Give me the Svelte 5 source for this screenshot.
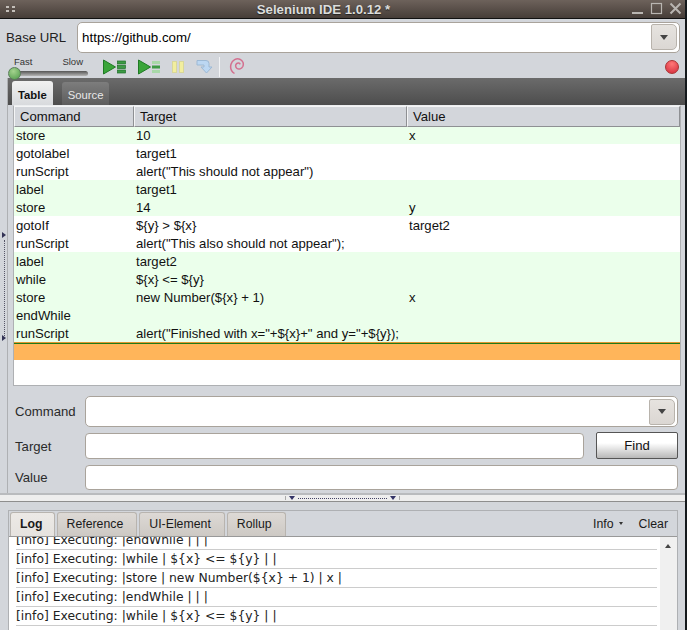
<script>
	const rows = [
		["store", "10", "x", "ok"],
		["gotolabel", "target1", "", ""],
		["runScript", 'alert("This should not appear")', "", ""],
		["label", "target1", "", "ok"],
		["store", "14", "y", "ok"],
		["gotoIf", "${y} > ${x}", "target2", ""],
		["runScript", 'alert("This also should not appear");', "", ""],
		["label", "target2", "", "ok"],
		["while", "${x} <= ${y}", "", "ok"],
		["store", "new Number(${x} + 1)", "x", "ok"],
		["endWhile", "", "", "ok"],
		["runScript", 'alert("Finished with x="+${x}+" and y="+${y});', "", "ok"]
	];

	const logLines = [
		"[info] Executing: |endWhile | | |",
		"[info] Executing: |while | ${x} <= ${y} | |",
		"[info] Executing: |store | new Number(${x} + 1) | x |",
		"[info] Executing: |endWhile | | |",
		"[info] Executing: |while | ${x} <= ${y} | |"
	];
</script>

<div class="window">
	<header class="titlebar">
		<span class="grip"><i></i><i></i><i></i><i></i></span>
		<span class="title">Selenium IDE 1.0.12 *</span>
		<span class="controls">
			<svg width="54" height="14" viewBox="0 0 54 14" fill="none" stroke="#b9b5b1">
				<path d="M1 11h11" stroke-width="2" />
				<rect x="20.500" y="1.500" width="10" height="10" stroke-width="1.200" />
				<path d="M39.500 1.500l10 10M49.500 1.500l-10 10" stroke-width="2" />
			</svg>
		</span>
	</header>

	<div class="url-row">
		<label for="base-url">Base URL</label>
		<div class="combo">
			<input id="base-url" value="https://github.com/" />
			<span class="drop"><b></b></span>
		</div>
	</div>

	<div class="toolbar">
		<div class="speed">
			<div class="speed-labels"><span>Fast</span><span>Slow</span></div>
			<div class="track"><span class="knob"></span></div>
		</div>
		<svg class="play" width="26" height="18" viewBox="0 0 26 18">
			<path d="M1.500 2l12 7-12 7z" fill="#3aa53a" stroke="#1f7a25" />
			<g fill="#3d9a45" stroke="#1f6f2a" stroke-width=".7">
				<rect x="15.500" y="3" width="8" height="3" />
				<rect x="15.500" y="7.500" width="8" height="3" />
				<rect x="15.500" y="12" width="8" height="3" />
			</g>
		</svg>
		<svg class="play" width="26" height="18" viewBox="0 0 26 18">
			<path d="M1.500 2l12 7-12 7z" fill="#3aa53a" stroke="#1f7a25" />
			<rect x="15" y="3" width="8" height="3" fill="#a8d8a8" />
			<rect x="15" y="7.500" width="8" height="3" fill="#3d9a45" />
			<rect x="15" y="12" width="8" height="3" fill="#a8d8a8" />
		</svg>
		<svg class="play pause" width="14" height="18" viewBox="0 0 14 18">
			<g fill="#f2ee9e" stroke="#d8d79a">
				<rect x="1.500" y="3.500" width="4" height="11" />
				<rect x="8.500" y="3.500" width="4" height="11" />
			</g>
		</svg>
		<svg class="step" width="17" height="18" viewBox="0 0 17 18">
			<path d="M1 2.500h9a3 3 0 0 1 3 3V9h3l-5.500 6L5 9h3V7H1z" fill="#bcd7f2" stroke="#9db9d4" />
		</svg>
		<span class="sep"></span>
		<svg class="swirl" width="16" height="18" viewBox="0 0 16 18" fill="none" stroke="#d3708f" stroke-width="1.500">
			<path d="M5.500 16.500C2.500 14.500 1 11 2 7.300 3.200 3 7.500 1 10.800 2.200c3.200 1.200 4.200 4.600 3 7.300-1.200 2.400-4 3.300-5.800 2-1.700-1.200-1.800-3.700-.4-4.900 1.200-1 3-.7 3.600.8" />
		</svg>
		<span class="record"></span>
	</div>

	<div class="body">
		<div class="gutter">
			<span class="arrow top"></span>
			<span class="dots"></span>
			<span class="arrow low"></span>
		</div>
		<div class="main">
			<div class="editor-tabs">
				<span class="etab active">Table</span>
				<span class="etab">Source</span>
			</div>
			<div class="table">
				<div class="row head">
					<span>Command</span><span>Target</span><span>Value</span>
				</div>
				{#each rows as r}
					<div class="row" class:ok={r[3] === "ok"}>
						<span>{r[0]}</span><span>{r[1]}</span><span>{r[2]}</span>
					</div>
				{/each}
				<div class="row current"></div>
				<div class="blank"></div>
			</div>

			<div class="form">
				<div class="field cmd">
					<label for="f-cmd">Command</label>
					<div class="combo">
						<input id="f-cmd" />
						<span class="drop"><b></b></span>
					</div>
				</div>
				<div class="field tgt">
					<label for="f-tgt">Target</label>
					<input id="f-tgt" />
					<button>Find</button>
				</div>
				<div class="field val">
					<label for="f-val">Value</label>
					<input id="f-val" />
				</div>
			</div>
		</div>
	</div>

	<div class="splitter">
		<div class="grippy"><b></b><span></span><b></b></div>
	</div>

	<div class="bottom">
		<div class="log-panel">
			<div class="log-tabs">
				<span class="ltab active">Log</span>
				<span class="ltab">Reference</span>
				<span class="ltab">UI-Element</span>
				<span class="ltab">Rollup</span>
				<span class="spacer"></span>
				<span class="log-btn">Info <b></b></span>
				<span class="log-btn clear">Clear</span>
			</div>
			<div class="log-body">
				<div class="log-lines">
					{#each logLines as line}
						<div class="log-line">{line}</div>
					{/each}
				</div>
				<div class="scrollbar"><b></b></div>
			</div>
		</div>
	</div>
</div>

<style>
	:global(body) {
		margin: 0;
		background: #14191c;
	}

	.window {
		width: 685px;
		height: 630px;
		overflow: hidden;
		display: flex;
		flex-direction: column;
		background: #d3d6db;
		font-family: "Liberation Sans", Arial, sans-serif;
		font-size: 13.15px;
		color: #1a1a1a;
	}

	.titlebar {
		flex: none;
		height: 18px;
		display: flex;
		align-items: center;
		justify-content: center;
		padding-right: 38px;
		position: relative;
		background: linear-gradient(#6d625b, #463d38);
		border-bottom: 1px solid #111;
	}

	.title {
		font-weight: bold;
		font-size: 13.2px;
		color: #dcdddc;
		text-shadow: 0 1px 1px #222;
	}

	.grip {
		position: absolute;
		left: 6px;
		top: 6px;
		display: grid;
		grid-template-columns: 3px 3px;
		gap: 2px 3px;
	}

	.grip i {
		height: 2px;
		background: #c4bfba;
	}

	.controls {
		position: absolute;
		right: 0;
		top: 2px;
		line-height: 0;
	}

	.url-row {
		flex: none;
		height: 36px;
		display: flex;
		align-items: center;
		padding: 0 5px 0 6px;
		gap: 11px;
	}

	.url-row label {
		font-size: 13.2px;
		color: #222;
	}

	.combo {
		flex: 1;
		display: flex;
		align-items: center;
		height: 31px;
		background: #fff;
		border: 1px solid #a9a39b;
		border-radius: 5px;
		padding-right: 2px;
		box-sizing: border-box;
	}

	input {
		flex: 1;
		min-width: 0;
		border: 1px solid #a9a39b;
		border-radius: 4px;
		background: #fff;
		box-sizing: border-box;
		font: inherit;
		outline: none;
		padding: 0 4px;
	}

	.combo input {
		border: none;
		height: 100%;
		background: transparent;
		font-size: 13.3px;
	}

	.drop {
		width: 26px;
		height: 26px;
		flex: none;
		display: flex;
		align-items: center;
		justify-content: center;
		box-sizing: border-box;
		background: linear-gradient(#e6e3df, #dbd7d3);
		border: 1px solid #b8b3ac;
		border-radius: 2px 5px 5px 2px;
	}

	.drop b {
		border: 4px solid transparent;
		border-top: 5px solid #444;
		border-bottom: none;
	}

	.toolbar {
		flex: none;
		height: 23px;
		display: flex;
		align-items: center;
		position: relative;
		padding-left: 8px;
	}

	.speed {
		width: 80px;
		margin-right: 14px;
	}

	.speed-labels {
		display: flex;
		justify-content: space-between;
		font-size: 9.500px;
		line-height: 10px;
		padding: 0 5px 0 6px;
		color: #333;
	}

	.track {
		height: 5px;
		margin: 4px 0 0 4px;
		border-radius: 3px;
		background: linear-gradient(#555, #b5b5b5);
		position: relative;
	}

	.knob {
		position: absolute;
		left: -4px;
		top: -4px;
		width: 13px;
		height: 13px;
		border-radius: 50%;
		background: radial-gradient(circle at 40% 30%, #a4d38e, #4f9a4a);
		border: 1px solid #5a7d5a;
		box-sizing: border-box;
	}

	.play {
		margin-right: 9px;
		flex: none;
	}

	.pause {
		margin: 0 11px 0 -1px;
	}

	.step {
		flex: none;
	}

	.sep {
		width: 1px;
		height: 20px;
		background: #f2f3f5;
		margin: 0 9px 0 6px;
	}

	.swirl {
		flex: none;
		margin-top: -2px;
	}

	.record {
		position: absolute;
		right: 6px;
		top: 5px;
		width: 14px;
		height: 14px;
		box-sizing: border-box;
		border-radius: 50%;
		border: 1px solid #a33;
		background: radial-gradient(circle at 50% 25%, #f77, #d22b3b);
	}

	.body {
		flex: none;
		height: 415px;
		display: flex;
	}

	.gutter {
		width: 7px;
		flex: none;
		border-right: 1px solid #aeb0b3;
		position: relative;
	}

	.dots {
		position: absolute;
		left: 4px;
		top: 162px;
		height: 96px;
		border-left: 1px dotted #556;
	}

	.arrow {
		position: absolute;
		left: 2px;
		border: 3px solid transparent;
		border-left: 4px solid #335;
		border-right: none;
	}

	.arrow.top {
		top: 154px;
	}

	.arrow.low {
		top: 257px;
	}

	.main {
		flex: 1;
		min-width: 0;
		display: flex;
		flex-direction: column;
	}

	.editor-tabs {
		flex: none;
		height: 27px;
		display: flex;
		align-items: flex-end;
		padding-left: 4px;
		gap: 9px;
		box-sizing: border-box;
		background: linear-gradient(#6b6b6b, #4d4d4d);
	}

	.etab {
		height: 23px;
		box-sizing: border-box;
		padding: 7px 6px 0;
		font-size: 11.300px;
		color: #e8e8e8;
		background: linear-gradient(#7d7d7d, #5d5d5d);
		border-radius: 3px 3px 0 0;
	}

	.etab.active {
		height: 24px;
		padding: 8px 6px 0;
		font-weight: bold;
		color: #111;
		background: linear-gradient(#f1f1f1, #d8dadd);
	}

	.table {
		flex: none;
		margin: 0 4px 0 5px;
		background: #fff;
		border: 1px solid #aeb0b3;
		border-top: 1px solid #eceef0;
	}

	.row {
		display: grid;
		grid-template-columns: 120px 273px 1fr;
		height: 18px;
		line-height: 19px;
		white-space: nowrap;
		color: #111;
	}

	.row span {
		padding-left: 2px;
	}

	.row.ok {
		background: #ebffeb;
	}

	.row.head {
		height: 20px;
		background: #d3d6db;
		line-height: 19px;
	}

	.row.head span {
		padding-left: 5px;
		border: 1px solid;
		border-color: #f4f5f6 #8e9093 #8e9093 #f4f5f6;
		box-sizing: border-box;
	}

	.row.current {
		background: linear-gradient(#e0962f 1px, #1f7a1a 1px 2px, #ffb55a 2px);
	}

	.blank {
		height: 25px;
	}

	.form {
		flex: 1;
		display: flex;
		flex-direction: column;
		padding: 10px 7px 0 7px;
	}

	.field {
		display: flex;
		align-items: center;
	}

	.field label {
		width: 70px;
		flex: none;
		color: #2a2a2a;
	}

	.field.tgt {
		margin-top: 6px;
		height: 26px;
	}

	.field.tgt input {
		height: 26px;
	}

	.field.val {
		margin-top: 6px;
		height: 25px;
	}

	.field.val input {
		height: 25px;
	}

	button {
		width: 82px;
		height: 27px;
		flex: none;
		margin: -1px 0 0 12px;
		font: inherit;
		color: #111;
		border: 1px solid #555;
		border-radius: 2px;
		background: linear-gradient(#fff 40%, #b8b8b8);
		padding: 0;
	}

	.splitter {
		flex: none;
		height: 9px;
		border-bottom: 1px solid #8e8e8e;
		border-top: 2px solid #b9bbbe;
		background: #eeeeee;
		box-sizing: border-box;
		display: flex;
		padding-left: 285px;
		align-items: center;
	}

	.grippy {
		display: flex;
		align-items: center;
		gap: 3px;
		width: 115px;
		box-sizing: border-box;
		padding: 0 3px;
		border-left: 1px solid #aaa;
		border-right: 1px solid #aaa;
	}

	.grippy b {
		border: 3px solid transparent;
		border-top: 4px solid #336;
		border-bottom: none;
	}

	.grippy span {
		flex: 1;
		border-top: 1px dotted #446;
	}

	.bottom {
		flex: 1;
		min-height: 0;
		padding: 8px 7px 0 8px;
	}

	.log-panel {
		height: 100%;
		border: 1px solid #aeb0b3;
		border-bottom: none;
		box-sizing: border-box;
		display: flex;
		flex-direction: column;
	}

	.log-tabs {
		flex: none;
		height: 26px;
		padding-left: 1px;
		display: flex;
		align-items: flex-end;
		gap: 2px;
		border-bottom: 1px solid #999;
		font-size: 12.300px;
		box-sizing: border-box;
	}

	.ltab {
		height: 24px;
		padding: 0 13px 0 9px;
		line-height: 23px;
		box-sizing: border-box;
		background: linear-gradient(#ddd9d5, #cdc9c4);
		border: 1px solid #b8b4af;
		border-bottom: none;
		border-radius: 3px 3px 0 0;
		color: #1a1a1a;
	}

	.ltab.active {
		padding-right: 11px;
		font-weight: bold;
		background: linear-gradient(#ece9e6, #e6e3df);
	}

	.spacer {
		flex: 1;
	}

	.log-btn {
		align-self: center;
		margin-right: 9px;
		display: flex;
		align-items: center;
		gap: 5px;
	}

	.log-btn.clear {
		margin-left: 5px;
	}

	.log-btn b {
		border: 2px solid transparent;
		border-top: 3px solid #333;
		border-bottom: none;
	}

	.log-body {
		flex: 1;
		min-height: 0;
		display: flex;
		background: #fff;
	}

	.log-lines {
		flex: 1;
		min-width: 0;
		margin-left: 7px;
		overflow: hidden;
	}

	.log-line {
		height: 18px;
		line-height: 18px;
		border-bottom: 1px solid #ccc;
		font-family: "DejaVu Sans", sans-serif;
		font-size: 12.350px;
		color: #222;
		white-space: pre;
	}

	.log-line:first-child {
		margin-top: -6px;
	}

	.scrollbar {
		width: 17px;
		flex: none;
		margin-left: 3px;
		background: #f0f0f0;
		position: relative;
	}

	.scrollbar b {
		position: absolute;
		left: 5px;
		top: 7px;
		border: 3px solid transparent;
		border-bottom: 4px solid #444;
		border-top: none;
	}
</style>
